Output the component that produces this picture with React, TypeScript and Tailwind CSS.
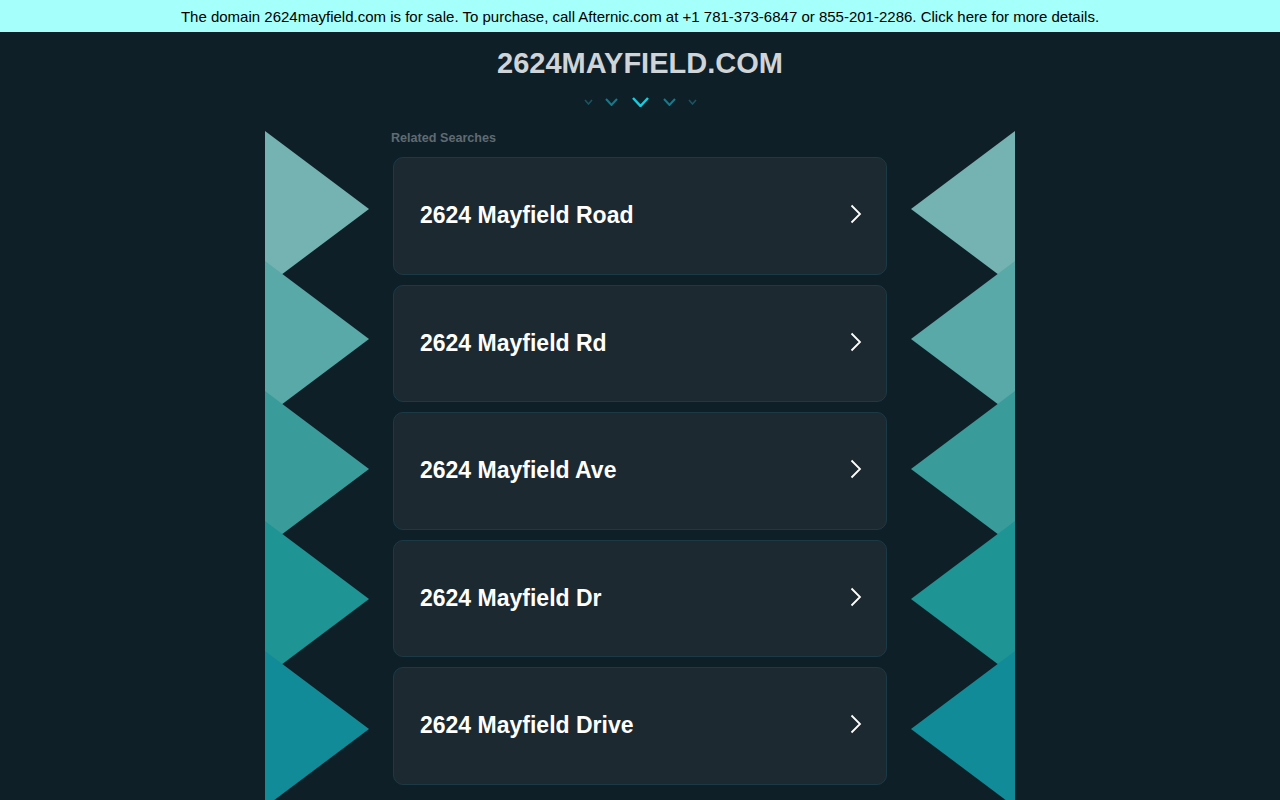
import React from "react";

const colors = ["#74b3b1", "#58a9a8", "#3a9c9a", "#1f9494", "#128b98"];
const items = [
  "2624 Mayfield Road",
  "2624 Mayfield Rd",
  "2624 Mayfield Ave",
  "2624 Mayfield Dr",
  "2624 Mayfield Drive",
];

function Triangles({ flip }: { flip?: boolean }) {
  return (
    <svg width="104" height="676" viewBox="0 0 104 676" className="block shrink-0">
      {colors.map((c, i) => {
        const y = i * 130;
        const pts = flip
          ? `104,${y} 0,${y + 78} 104,${y + 156}`
          : `0,${y} 104,${y + 78} 0,${y + 156}`;
        return <polygon key={i} points={pts} fill={c} />;
      })}
    </svg>
  );
}

function Chev({ w, h, color, sw }: { w: number; h: number; color: string; sw: number }) {
  return (
    <svg width={w} height={h} viewBox={`0 0 ${w} ${h}`}>
      <polyline
        points={`1,1 ${w / 2},${h - 1} ${w - 1},1`}
        fill="none"
        stroke={color}
        strokeWidth={sw}
      />
    </svg>
  );
}

export default function App() {
  return (
    <div
      className="h-[800px] overflow-hidden bg-[#0f1f27]"
      style={{ fontFamily: '"Liberation Sans", Arial, sans-serif' }}
    >
      <div className="h-8 bg-[#a5fffb] flex items-center justify-center pt-[3px] text-[15px] text-black">
        The domain 2624mayfield.com is for sale. To purchase, call Afternic.com at +1 781-373-6847 or 855-201-2286. Click here for more details.
      </div>
      <div className="flex flex-col items-center">
        <h1 className="mt-[13px] text-[29px] leading-[36px] font-bold text-[#cfd4d8]">2624MAYFIELD.COM</h1>
        <div className="mt-[16px] h-[10px] flex items-center justify-center">
          <div className="w-[23px] flex justify-center"><Chev w={9} h={6} color="#1a5563" sw={1.5} /></div>
          <div className="w-[23px] flex justify-center"><Chev w={13} h={8} color="#1d7786" sw={2} /></div>
          <div className="w-[35px] flex justify-center"><Chev w={17} h={10} color="#1ccadb" sw={2.5} /></div>
          <div className="w-[23px] flex justify-center"><Chev w={13} h={8} color="#1d7786" sw={2} /></div>
          <div className="w-[23px] flex justify-center"><Chev w={9} h={6} color="#1a5563" sw={1.5} /></div>
        </div>
        <div className="mt-[24px] flex gap-[22px]">
          <Triangles />
          <div className="w-[498px]">
            <div className="text-[12.6px] leading-[14px] font-bold text-[#5f6b72] h-[26px]">Related Searches</div>
            <div className="flex flex-col gap-[10px] px-[2px]">
              {items.map((t) => (
                <div
                  key={t}
                  className="h-[117.5px] rounded-[10px] border border-[#1a3b46] bg-[#1c2930] flex items-center justify-between pl-[26px] pr-[24px]"
                >
                  <span className="text-[23px] leading-[28px] font-bold text-white -mt-[1px]">{t}</span>
                  <svg width="12" height="20" viewBox="0 0 12 20" className="-mt-[3px]">
                    <polyline points="1.5,1.5 10,10 1.5,18.5" fill="none" stroke="#ffffff" strokeWidth="1.8" />
                  </svg>
                </div>
              ))}
            </div>
          </div>
          <Triangles flip />
        </div>
      </div>
    </div>
  );
}
